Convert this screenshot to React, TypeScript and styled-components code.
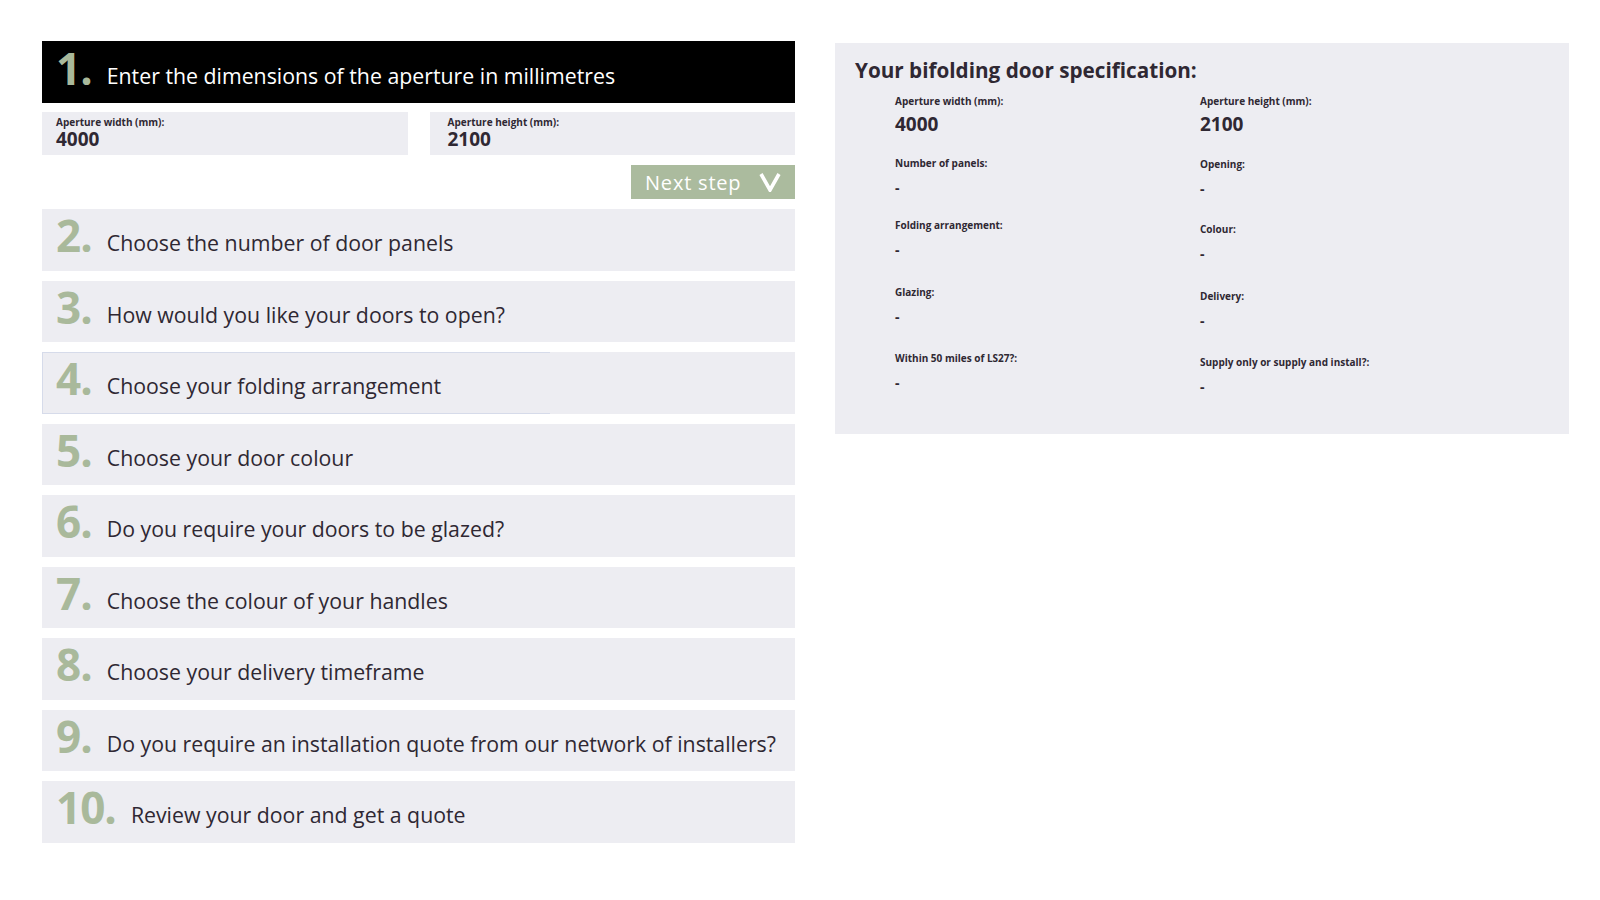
import styled, { createGlobalStyle } from "styled-components";

const GlobalStyle = createGlobalStyle`
  body {
    margin: 0;
    background: #ffffff;
    font-family: "Open Sans", "Noto Sans", sans-serif;
    color: #2f2833;
  }
`;

const Page = styled.div`
  display: flex;
  align-items: flex-start;
  gap: 40px;
  padding: 41px 0 0 42px;
`;

const Steps = styled.div`
  display: flex;
  flex-direction: column;
  width: 753px;
`;

const StepHeader = styled.div<{ $active?: boolean; $outlined?: boolean }>`
  position: relative;
  display: flex;
  align-items: center;
  height: ${(p) => (p.$active ? "62px" : "61.5px")};
  padding-left: 14px;
  box-sizing: border-box;
  background: ${(p) => (p.$active ? "#000000" : "#ededf2")};
  color: ${(p) => (p.$active ? "#ffffff" : "#2f2833")};
  margin-bottom: ${(p) => (p.$active ? "0" : "10px")};
  ${(p) =>
    p.$outlined &&
    `
    &::after {
      content: "";
      position: absolute;
      left: 0;
      top: 0;
      bottom: 0;
      width: 507px;
      border: 1px solid #d6dbea;
      border-right: none;
      pointer-events: none;
    }
  `}
`;

const StepNumber = styled.span`
  font-size: 44px;
  font-weight: 700;
  color: #a9b99b;
  letter-spacing: -1px;
  line-height: 1;
  margin-top: -9px;
  margin-right: 15px;
`;

const StepTitle = styled.span`
  font-size: 21.3px;
  margin-top: 6px;
`;

const Inputs = styled.div`
  display: grid;
  grid-template-columns: 1fr 1fr;
  gap: 22px;
  margin-top: 9px;
`;

const InputBox = styled.div<{ $pad: number }>`
  background: #ededf2;
  height: 43px;
  padding: 3px 14px 0 ${(p) => p.$pad}px;
  box-sizing: border-box;
`;

const InputLabel = styled.div`
  font-size: 10px;
  font-weight: 700;
  line-height: 14px;
`;

const InputValue = styled.div`
  font-size: 19px;
  font-weight: 700;
  line-height: 21px;
`;

const NextRow = styled.div`
  display: flex;
  justify-content: flex-end;
  margin: 10px 0;
`;

const NextButton = styled.button`
  display: flex;
  align-items: center;
  justify-content: space-between;
  width: 164px;
  height: 34px;
  padding: 0 14px 0 14px;
  border: 0;
  background: #abbb9e;
  color: #ffffff;
  font-family: "Open Sans", sans-serif;
  font-size: 20px;
  letter-spacing: 0.8px;
  cursor: pointer;
`;

const Spec = styled.div`
  width: 734px;
  height: 391px;
  margin-top: 2px;
  padding: 13px 20px 0;
  box-sizing: border-box;
  background: #ededf2;
`;

const SpecTitle = styled.h2`
  margin: 0 0 10px;
  font-size: 20.7px;
  font-weight: 700;
  line-height: 28px;
`;

const SpecGrid = styled.div`
  display: grid;
  grid-template-columns: 305px 305px;
  padding-left: 40px;
`;

const SpecCol = styled.div`
  display: flex;
  flex-direction: column;
`;

const SpecItem = styled.div<{ $h: number }>`
  height: ${(p) => p.$h}px;
`;

const SpecLabel = styled.div`
  font-size: 10px;
  font-weight: 700;
  line-height: 14px;
`;

const SpecValue = styled.div<{ $big?: boolean }>`
  font-size: ${(p) => (p.$big ? "19px" : "14px")};
  font-weight: 700;
  line-height: ${(p) => (p.$big ? "28px" : "24px")};
  margin-top: ${(p) => (p.$big ? "2px" : "6px")};
`;

const steps = [
  "Choose the number of door panels",
  "How would you like your doors to open?",
  "Choose your folding arrangement",
  "Choose your door colour",
  "Do you require your doors to be glazed?",
  "Choose the colour of your handles",
  "Choose your delivery timeframe",
  "Do you require an installation quote from our network of installers?",
  "Review your door and get a quote",
];

const leftSpec = [
  { label: "Aperture width (mm):", value: "4000", big: true, h: 62 },
  { label: "Number of panels:", value: "-", h: 62 },
  { label: "Folding arrangement:", value: "-", h: 67 },
  { label: "Glazing:", value: "-", h: 66 },
  { label: "Within 50 miles of LS27?:", value: "-", h: 60 },
];

const rightSpec = [
  { label: "Aperture height (mm):", value: "2100", big: true, h: 63 },
  { label: "Opening:", value: "-", h: 65 },
  { label: "Colour:", value: "-", h: 67 },
  { label: "Delivery:", value: "-", h: 66 },
  { label: "Supply only or supply and install?:", value: "-", h: 60 },
];

export default function App() {
  return (
    <>
      <GlobalStyle />
      <Page>
        <Steps>
          <StepHeader $active>
            <StepNumber>1.</StepNumber>
            <StepTitle>Enter the dimensions of the aperture in millimetres</StepTitle>
          </StepHeader>
          <Inputs>
            <InputBox $pad={14}>
              <InputLabel>Aperture width (mm):</InputLabel>
              <InputValue>4000</InputValue>
            </InputBox>
            <InputBox $pad={18}>
              <InputLabel>Aperture height (mm):</InputLabel>
              <InputValue>2100</InputValue>
            </InputBox>
          </Inputs>
          <NextRow>
            <NextButton>
              Next step
              <svg width="22" height="20" viewBox="0 0 22 20">
                <path d="M2 2 L11 18 L20 2" fill="none" stroke="#ffffff" strokeWidth="3.6" />
              </svg>
            </NextButton>
          </NextRow>
          {steps.map((title, i) => (
            <StepHeader key={title} $outlined={i === 2}>
              <StepNumber>{i + 2}.</StepNumber>
              <StepTitle>{title}</StepTitle>
            </StepHeader>
          ))}
        </Steps>
        <Spec>
          <SpecTitle>Your bifolding door specification:</SpecTitle>
          <SpecGrid>
            <SpecCol>
              {leftSpec.map((s) => (
                <SpecItem key={s.label} $h={s.h}>
                  <SpecLabel>{s.label}</SpecLabel>
                  <SpecValue $big={s.big}>{s.value}</SpecValue>
                </SpecItem>
              ))}
            </SpecCol>
            <SpecCol>
              {rightSpec.map((s) => (
                <SpecItem key={s.label} $h={s.h}>
                  <SpecLabel>{s.label}</SpecLabel>
                  <SpecValue $big={s.big}>{s.value}</SpecValue>
                </SpecItem>
              ))}
            </SpecCol>
          </SpecGrid>
        </Spec>
      </Page>
    </>
  );
}
